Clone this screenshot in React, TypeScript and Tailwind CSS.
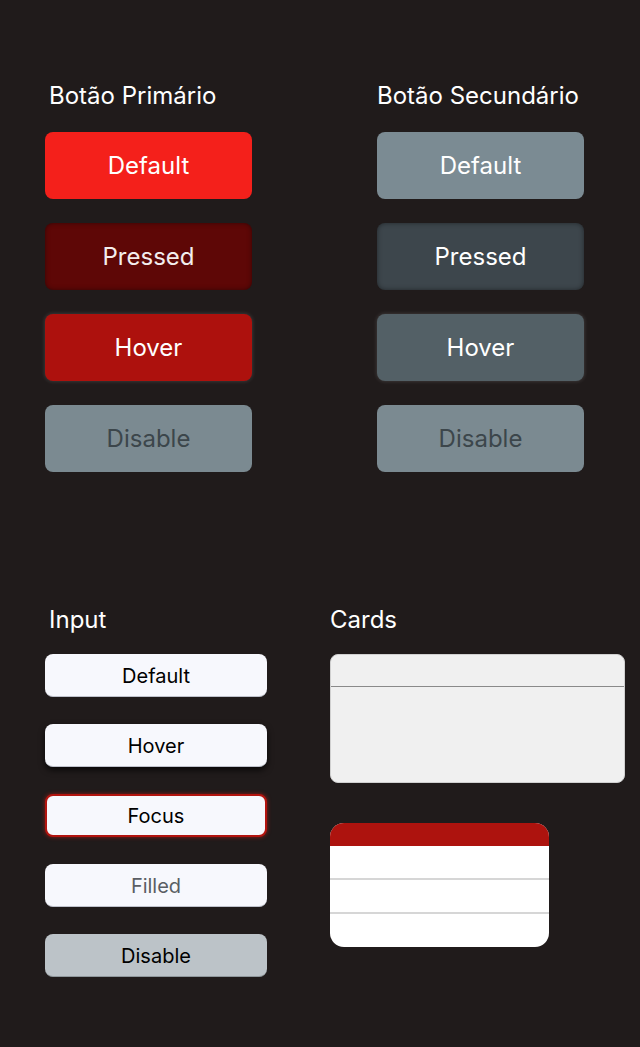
import React from "react";

const font = { fontFamily: "Inter, 'Noto Sans', sans-serif" };

function Btn({ label, cls }: { label: string; cls: string }) {
  return (
    <div className={`h-[67px] w-[207px] rounded-[8px] flex items-center justify-center text-[24px] ${cls}`}>
      {label}
    </div>
  );
}

function Input({ label, cls }: { label: string; cls: string }) {
  return (
    <div className={`h-[43px] w-[222px] rounded-[8px] flex items-center justify-center text-[20px] pt-[1px] ${cls}`}>
      {label}
    </div>
  );
}

export default function App() {
  return (
    <div className="min-h-[1047px] w-[640px] bg-[#201b1b] font-['Inter']" style={font}>
      <div className="flex pl-[45px] pt-[82px]">
        <div className="flex flex-col">
          <div className="pl-[4px] text-[24px] leading-[28px] text-white mb-[22px]">Botão Primário</div>
          <div className="flex flex-col gap-6">
            <Btn label="Default" cls="bg-[#f4201b] text-white" />
            <Btn label="Pressed" cls="bg-[#5e0706] text-[#f3eded] shadow-[inset_0_0_5px_rgba(0,0,0,0.45)]" />
            <Btn label="Hover" cls="bg-[#ad110d] text-white shadow-[0_0_4px_rgba(255,255,255,0.18)]" />
            <Btn label="Disable" cls="bg-[#7b8a91] text-[#3c464b]" />
          </div>
        </div>
        <div className="flex flex-col ml-[125px]">
          <div className="pl-[0px] text-[24px] leading-[28px] text-white mb-[22px]">Botão Secundário</div>
          <div className="flex flex-col gap-6">
            <Btn label="Default" cls="bg-[#7b8b93] text-white" />
            <Btn label="Pressed" cls="bg-[#3d464c] text-white shadow-[inset_0_0_5px_rgba(0,0,0,0.45)]" />
            <Btn label="Hover" cls="bg-[#536066] text-white shadow-[0_0_4px_rgba(255,255,255,0.18)]" />
            <Btn label="Disable" cls="bg-[#7b8a91] text-[#3c464b]" />
          </div>
        </div>
      </div>

      <div className="flex pl-[45px] pt-[134px]">
        <div className="flex flex-col">
          <div className="pl-[4px] text-[24px] leading-[28px] text-white mb-[20px]">Input</div>
          <div className="flex flex-col gap-[27px]">
            <Input label="Default" cls="bg-[#f7f8fd] text-black border-b border-[#bfc2cc]" />
            <Input label="Hover" cls="bg-[#f7f8fd] text-black border-b border-[#bfc2cc] shadow-[0_3px_6px_rgba(0,0,0,0.75)]" />
            <Input label="Focus" cls="bg-[#f7f8fd] text-black border-2 border-[#b3140f] shadow-[0_0_4px_rgba(220,30,20,0.6)]" />
            <Input label="Filled" cls="bg-[#f7f8fd] text-[#5a5e64] border-b border-[#bfc2cc]" />
            <Input label="Disable" cls="bg-[#bcc3c8] text-black border-b border-[#8f979c]" />
          </div>
        </div>
        <div className="flex flex-col ml-[63px]">
          <div className="pl-[0px] text-[24px] leading-[28px] text-white mb-[20px]">Cards</div>
          <div className="w-[295px] h-[129px] rounded-[8px] bg-[#f0f0f0] border border-[#d0d0d0] flex flex-col overflow-hidden">
            <div className="h-[32px] border-b border-[#8a8a8a]" />
          </div>
          <div className="mt-[40px] w-[219px] h-[124px] rounded-[14px] bg-white overflow-hidden flex flex-col">
            <div className="h-[23px] bg-[#ad130e]" />
            <div className="h-[34px] border-b-2 border-[#d6d6d6]" />
            <div className="h-[34px] border-b-2 border-[#d6d6d6]" />
            <div className="flex-1" />
          </div>
        </div>
      </div>
    </div>
  );
}
